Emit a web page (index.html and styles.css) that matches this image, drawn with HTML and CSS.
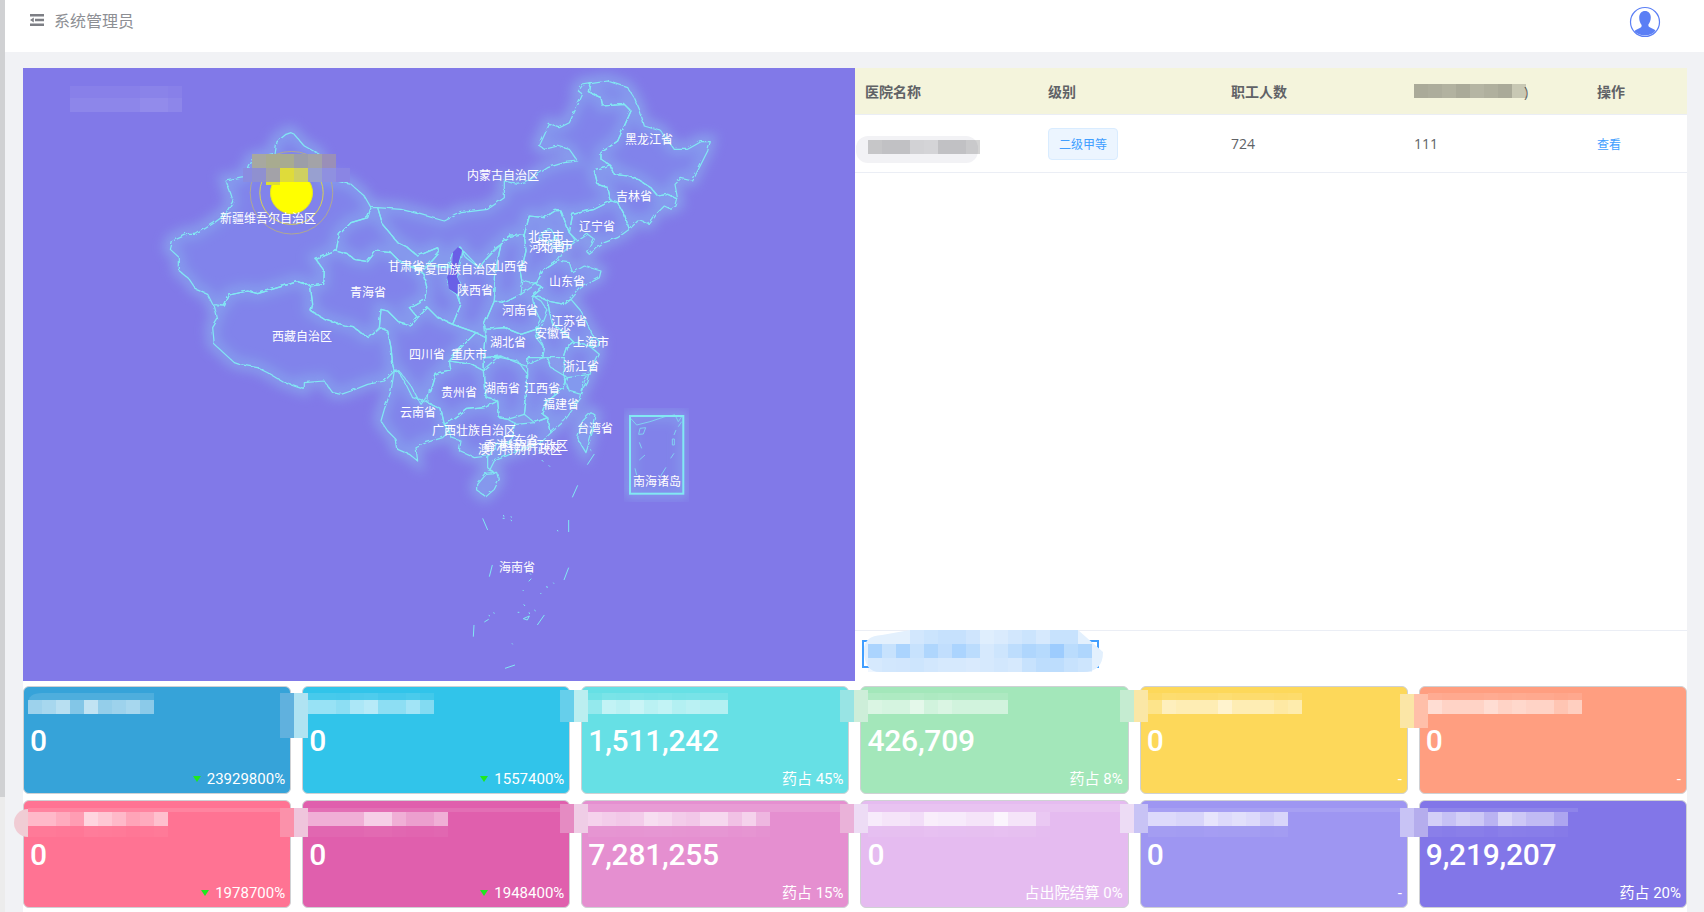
FILE: index.html
```html
<!DOCTYPE html>
<html lang="zh">
<head>
<meta charset="utf-8">
<title>系统管理员</title>
<link rel="stylesheet" href="styles.css">
</head>
<body>
<div class="app">
  <div class="strip"></div>
  <div class="main">
    <header class="topbar">
      <div class="topbar-left">
        <svg class="menu-icon" width="14" height="12" viewBox="0 0 14 12"><path d="M0 0h14v2.600H0zM5 4.700h9v2.600H5zM0 9.400h14V12H0zM0 6l3.800-2.400v4.800z"/></svg>
        <span class="role">系统管理员</span>
      </div>
      <svg class="avatar" width="32" height="32" viewBox="0 0 32 32">
        <circle cx="16" cy="16" r="14.500" fill="#fff" stroke="#5b7ff5" stroke-width="1.200"/>
        <path d="M16 5c3.400 0 5.800 2.600 5.800 6.300 0 3-1 5.400-2.400 7.200-.3 1.500.5 2.500 1.800 3.100l4 1.900c.6.300 1 .8 1.300 1.300A13.300 13.300 0 0 1 16 29.400 13.300 13.300 0 0 1 5.500 25.300c.3-.5.700-1 1.300-1.300l4-1.900c1.300-.6 2.100-1.600 1.800-3.100-1.400-1.800-2.400-4.200-2.400-7.200C10.200 7.600 12.600 5 16 5z" fill="#5b7ff5"/>
      </svg>
    </header>
    <div class="content">
      <section class="top-row">
        <div class="map-panel">
          <svg class="map" viewBox="23 68 832 613" width="832" height="613">
            <defs>
              <filter id="soft" x="-10%" y="-10%" width="120%" height="120%"><feGaussianBlur stdDeviation="6"/></filter>
              <filter id="rough" x="-5%" y="-5%" width="110%" height="110%">
                <feTurbulence type="turbulence" baseFrequency="0.16" numOctaves="2" seed="4" result="n"/>
                <feDisplacementMap in="SourceGraphic" in2="n" scale="2.600"/>
              </filter>
              <g id="provinces" transform="translate(150 70) scale(.33333)">
                <polygon points="420,185 405,190 378,212 372,250 305,265 280,320 225,330 240,370 248,395 230,425 190,455 135,490 108,490 65,510 58,535 85,560 85,600 115,625 135,655 170,670 185,700 220,705 235,672 290,660 320,668 380,650 440,632 480,645 518,640 520,600 495,565 555,540 565,490 600,455 650,440 660,410 640,375 600,340 555,330 520,325 505,250 460,225 430,190"/>
                <polygon points="190,705 220,705 235,672 290,660 320,668 380,650 440,632 478,645 485,700 480,720 520,745 580,765 610,770 635,790 655,800 690,770 710,780 720,830 725,880 730,900 700,930 650,940 600,960 570,970 545,965 520,930 460,935 460,955 400,935 350,905 320,890 265,880 250,875 190,820 185,770 200,745"/>
                <polygon points="495,565 555,540 590,550 610,565 650,572 675,540 720,545 745,570 785,590 820,610 830,650 825,685 790,705 775,710 800,740 780,765 745,755 710,720 690,715 685,770 655,800 635,790 610,770 580,765 520,745 480,720 485,700 478,645 518,640 520,600"/>
                <polygon points="565,490 600,455 650,440 660,410 680,410 695,460 720,490 740,515 770,530 800,555 860,530 865,545 830,585 815,600 830,650 825,685 790,705 775,710 800,740 830,710 860,740 905,760 930,700 920,672 897,655 890,620 905,590 830,585 785,590 745,570 720,545 675,540 650,572 610,565 590,550 555,540"/>
                <polygon points="680,410 750,415 810,430 880,450 930,425 1010,415 1060,380 1060,330 1100,340 1125,335 1160,310 1190,290 1240,275 1280,270 1255,235 1220,225 1180,235 1165,225 1195,160 1225,170 1255,155 1295,70 1282,60 1295,42 1320,38 1315,65 1350,80 1355,105 1420,100 1440,120 1420,165 1400,210 1350,245 1350,265 1380,285 1330,300 1340,340 1370,350 1380,390 1330,415 1265,430 1255,485 1230,420 1215,418 1180,440 1135,435 1120,490 1080,495 1050,520 1035,530 1000,570 985,590 945,560 930,530 910,545 890,590 830,585 865,545 860,530 800,555 770,530 740,515 720,490 695,460"/>
                <polygon points="1050,520 1035,590 1030,690 1000,760 1005,800 975,785 905,760 930,700 920,672 935,650 920,620 925,585 937,540 985,590 1000,570"/>
                <polygon points="685,770 690,715 710,720 745,755 780,765 800,740 830,710 860,740 905,760 975,785 930,830 895,870 900,900 855,910 840,960 810,1000 780,945 745,900 730,900 725,880 720,830 710,780"/>
                <polygon points="975,785 1005,800 1000,860 1000,900 960,880 895,870 930,830"/>
                <polygon points="1120,490 1075,500 1050,520 1035,590 1030,690 1060,695 1110,670 1115,630 1110,600 1125,540"/>
                <polygon points="1030,690 1060,695 1110,670 1155,640 1175,650 1145,675 1170,690 1190,720 1170,770 1110,790 1060,770 1005,775 1000,760"/>
                <polygon points="1005,775 1060,770 1110,790 1170,770 1155,800 1180,830 1175,860 1125,885 1110,880 1050,855 1000,860 1005,800"/>
                <polygon points="895,870 960,880 1000,900 1000,860 1050,855 1000,900 1005,980 1040,990 1000,1010 950,1015 910,1045 880,1060 870,1015 830,995 835,955 840,960 855,910 900,900"/>
                <g transform="translate(1050 0)">
                  <polygon points="270,38 320,30 380,50 400,80 415,115 430,165 480,180 520,235 560,235 600,212 628,212 620,240 600,280 575,330 540,322 522,340 530,385 500,370 470,375 450,350 440,345 410,325 380,315 340,310 330,285 300,265 300,245 350,210 370,165 390,120 370,100 305,105 300,80 265,65"/>
                  <polygon points="330,285 340,310 380,315 410,325 450,350 470,375 500,370 530,385 525,405 510,415 490,405 470,425 445,460 420,450 410,450 385,475 370,430 350,395 330,390 320,350 290,340 280,300"/>
                  <polygon points="330,390 350,395 370,430 385,475 350,500 310,515 290,530 265,550 260,545 280,505 260,490 230,510 205,485 215,430 280,415"/>
                  <polygon points="85,435 130,440 165,418 180,420 205,485 225,510 190,540 170,570 125,600 105,640 65,630 60,600 75,540 70,490"/>
                  <polygon points="130,480 150,475 165,500 140,515 115,500"/>
                  <polygon points="165,500 185,520 170,540 150,520"/>
                  <polygon points="170,570 205,575 215,605 250,585 300,600 295,620 240,650 210,685 190,700 140,690 120,680 95,675 125,650 105,640 125,600"/>
                  <polygon points="140,690 190,700 210,685 240,720 265,770 280,800 265,825 220,815 195,790 170,770 155,760 145,720"/>
                  <polygon points="140,690 145,720 155,760 170,770 195,790 220,815 200,830 190,860 145,860 125,860 130,830 105,780 120,750 105,720 95,675 120,680"/>
                  <polygon points="280,800 295,810 290,830 265,825"/>
                  <polygon points="200,830 220,815 265,825 295,850 270,900 260,935 240,970 205,960 190,920 190,860"/>
                </g>
                <g transform="translate(600 930)">
                  <polygon points="100,85 90,120 110,150 135,175 140,205 175,220 200,240 195,200 225,185 275,170 295,150 280,130 270,85 230,65 185,50 160,0 145,-25 130,-30 120,30"/>
                  <polygon points="280,130 295,150 300,170 330,180 325,210 370,230 410,225 425,215 440,190 480,185 495,130 470,115 445,110 440,60 400,80 350,85 310,115"/>
                  <polygon points="495,130 550,125 590,110 600,155 570,185 500,210 430,240 415,270 430,275 410,260 410,225 425,215 440,190 480,185"/>
                  <polygon points="400,-30 405,50 440,60 445,110 470,115 520,100 525,60 530,-20 500,-60 450,-70 400,-70"/>
                  <polygon points="525,60 520,100 550,125 590,110 575,100 590,60 640,20 650,-10 600,-40 590,-70 530,-70 530,-20"/>
                  <polygon points="590,110 600,155 640,120 690,50 700,0 715,-20 650,-10 640,20 590,60 575,100"/>
                  <polygon points="405,280 440,277 445,295 430,325 405,347 380,330 380,310"/>
                  <polygon points="720,95 735,105 725,150 705,215 690,190 680,170 695,120"/>
                </g>
              </g>
              <rect id="inset-box" x="630" y="416" width="53.300" height="77.700"/>
              <g id="islands" transform="translate(350 380) scale(.33333)">
                <path d="M733 222 712 254M683 316 667 352M656 420V456M656 563 642 600M583 705 562 735M495 855 465 865M372 735 370 770M427 555 418 590M398 415 413 450M575 240 580 245M596 256 600 260M720 208 724 212M622 450 624 454M460 405 462 410M458 415 464 415M482 410 486 412M482 420 486 423M540 580 543 584M536 604 544 596M588 620 594 622M610 608 612 611M518 630 521 633M571 642 574 639M521 673 525 678M503 697 508 697M553 690 557 693M430 698 434 700M416 706 420 708M403 726 416 718M486 790 488 793M537 697 539 702M520 716 538 708 532 720z"/>
                <path d="M842 115 860 135 900 125 945 110 975 105M975 105 985 125 995 110M870 145 887 143 880 162 866 163zM868 187 875 205M967 177H973V195H967zM978 150 972 165M995 125 985 140M885 225 868 240M972 220 962 235M948 262 932 288M855 265 860 285"/>
              </g>
            </defs>
            <use href="#provinces" class="glow" filter="url(#soft)"/>
            <use href="#inset-box" class="inset-glow" filter="url(#soft)"/>
            <use href="#provinces" class="fill"/>
            <use href="#provinces" class="line" filter="url(#rough)"/>
            <polygon class="ningxia" points="458,247 462,250 458,265 457,277 462,287 457,294 449,289 447,277 452,267 453,252"/>
            <use href="#islands" class="isles"/>
            <use href="#inset-box" class="inset"/>
            <circle class="ring-outer" cx="291.500" cy="192.700" r="41.300"/>
            <circle class="ring-inner" cx="291.500" cy="192.700" r="31.700"/>
            <circle class="dot" cx="291.500" cy="192.700" r="21"/>
            <g class="labels">
              <text x="268" y="217">新疆维吾尔自治区</text>
              <text x="503" y="174">内蒙古自治区</text>
              <text x="649" y="138">黑龙江省</text>
              <text x="634" y="195">吉林省</text>
              <text x="597" y="225">辽宁省</text>
              <text x="546" y="235">北京市</text>
              <text x="555" y="244">天津市</text>
              <text x="547" y="246">河北省</text>
              <text x="510" y="265">山西省</text>
              <text x="406" y="265">甘肃省</text>
              <text x="455" y="268">宁夏回族自治区</text>
              <text x="475" y="289">陕西省</text>
              <text x="368" y="291">青海省</text>
              <text x="567" y="280">山东省</text>
              <text x="520" y="309">河南省</text>
              <text x="569" y="320">江苏省</text>
              <text x="553" y="332">安徽省</text>
              <text x="591" y="341">上海市</text>
              <text x="508" y="341">湖北省</text>
              <text x="302" y="335">西藏自治区</text>
              <text x="427" y="353">四川省</text>
              <text x="469" y="353">重庆市</text>
              <text x="581" y="365">浙江省</text>
              <text x="459" y="391">贵州省</text>
              <text x="502" y="387">湖南省</text>
              <text x="542" y="387">江西省</text>
              <text x="561" y="403">福建省</text>
              <text x="418" y="411">云南省</text>
              <text x="595" y="427">台湾省</text>
              <text x="474" y="429">广西壮族自治区</text>
              <text x="520" y="439">广东省</text>
              <text x="526" y="444">香港特别行政区</text>
              <text x="520" y="448">澳门特别行政区</text>
              <text x="657" y="480">南海诸岛</text>
              <text x="517" y="566">海南省</text>
            </g>
          </svg>
        </div>
        <div class="table-panel">
          <div class="table-head">
            <div class="cell">医院名称</div>
            <div class="cell">级别</div>
            <div class="cell">职工人数</div>
            <div class="cell cell-paren">)</div>
            <div class="cell">操作</div>
          </div>
          <div class="table-row">
            <div class="cell"></div>
            <div class="cell"><span class="tag">二级甲等</span></div>
            <div class="cell">724</div>
            <div class="cell">111</div>
            <div class="cell"><a class="link">查看</a></div>
          </div>
          <div class="table-foot"><div class="outline-btn"></div></div>
        </div>
      </section>
      <section class="cards">
        <article class="card c1"><div class="value">0</div><div class="foot"><i class="down"></i>23929800%</div></article>
        <article class="card c2"><div class="value">0</div><div class="foot"><i class="down"></i>1557400%</div></article>
        <article class="card c3"><div class="value">1,511,242</div><div class="foot">药占 45%</div></article>
        <article class="card c4"><div class="value">426,709</div><div class="foot">药占 8%</div></article>
        <article class="card c5"><div class="value">0</div><div class="foot">-</div></article>
        <article class="card c6"><div class="value">0</div><div class="foot">-</div></article>
        <article class="card c7"><div class="value">0</div><div class="foot"><i class="down"></i>1978700%</div></article>
        <article class="card c8"><div class="value">0</div><div class="foot"><i class="down"></i>1948400%</div></article>
        <article class="card c9"><div class="value">7,281,255</div><div class="foot">药占 15%</div></article>
        <article class="card c10"><div class="value">0</div><div class="foot">占出院结算 0%</div></article>
        <article class="card c11"><div class="value">0</div><div class="foot">-</div></article>
        <article class="card c12"><div class="value">9,219,207</div><div class="foot">药占 20%</div></article>
      </section>
    </div>
  </div>
</div>
<svg id="redactions" class="redactions" viewBox="0 0 1704 912" width="1704" height="912">
  <rect class="blob-row" x="856" y="136" width="122" height="27" rx="12"/>
  <path class="blob-blue" d="M864 650q0-14 18-15l28-5h168l25 22q0 20-20 20H880q-16 0-16-22z"/>
  <path class="blob-pink" d="M28 809a14 14 0 0 0 0 28z"/>
  <path class="blob-card" d="M28 714v-10q0-11 14-11h112v21z"/>
</svg>
<script src="script.js"></script>
</body>
</html>
```
FILE: styles.css
```css
* { box-sizing: border-box; }
html, body { margin: 0; padding: 0; }
body {
  width: 1704px;
  height: 912px;
  overflow: hidden;
  position: relative;
  background: #f1f2f5;
  font-family: "Open Sans", "Noto Sans CJK SC", sans-serif;
  color: #606266;
}
.app { display: flex; height: 912px; }
.strip {
  width: 5px;
  flex: none;
  background: linear-gradient(#d0d1d3 0 797px, #ececec 797px);
}
.main { flex: 1; display: flex; flex-direction: column; min-width: 0; }
.topbar {
  height: 52px;
  flex: none;
  background: #fff;
  display: flex;
  align-items: flex-start;
  justify-content: space-between;
  padding: 0 43px 0 25px;
}
.topbar-left { display: flex; align-items: center; gap: 10px; height: 40px; }
.menu-icon { fill: #7d7f85; }
.role { font-size: 16px; color: #8d8f94; }
.avatar { margin-top: 6px; }
.content { padding: 16px 17px 0 18px; flex: 1; display: flex; flex-direction: column; }
.top-row { display: flex; height: 613px; flex: none; }
.map-panel { width: 832px; flex: none; background: #8179e8; }
.map { display: block; }
.glow { fill: none; stroke: #8fbcf0; stroke-width: 36; opacity: .55; }
.fill { fill: rgba(128, 152, 240, .34); stroke: none; }
.line { fill: none; stroke: #82e8f3; stroke-width: 3.600; stroke-linejoin: round; }
.ningxia { fill: #6a5fe6; }
.isles { fill: none; stroke: #82e8f3; stroke-width: 3; }
.inset { fill: rgba(128, 152, 240, .3); stroke: #82e8f3; stroke-width: 2; }
.inset-glow { fill: none; stroke: #8fbcf0; stroke-width: 8; opacity: .6; }
.labels text {
  font-family: "Noto Sans CJK SC", sans-serif;
  font-size: 12px;
  fill: #fff;
  text-anchor: middle;
  dominant-baseline: central;
}
.ring-outer { fill: none; stroke: #bcb07a; stroke-opacity: .8; stroke-width: 1; }
.ring-inner { fill: none; stroke: #e0d840; stroke-opacity: .9; stroke-width: 1; }
.dot { fill: #ffff00; stroke: #e8e820; stroke-width: 1; }

.table-panel { width: 832px; flex: none; background: #fff; display: flex; flex-direction: column; font-size: 14px; }
.table-head, .table-row { display: grid; grid-template-columns: repeat(4, 183px) 100px; align-items: center; }
.table-head { height: 47px; background: #f4f4dc; border-bottom: 1px solid #ebeef5; font-weight: 700; }
.table-row { height: 58px; border-bottom: 1px solid #ebeef5; }
.cell { padding: 0 10px; }
.cell-paren { padding-left: 120px; font-weight: 400; }
.tag {
  display: inline-flex;
  align-items: center;
  height: 32px;
  padding: 0 10px;
  font-size: 12px;
  color: #409eff;
  background: #ecf5ff;
  border: 1px solid #d9ecff;
  border-radius: 4px;
}
.link { font-size: 12px; color: #409eff; }
.table-foot { margin-top: auto; height: 51px; border-top: 1px solid #ebeef5; padding: 9px 0 0 7px; }
.outline-btn { width: 237px; height: 28px; border: 2px solid #409eff; }

.cards {
  flex: 1;
  background: #fff;
  display: grid;
  grid-template-columns: repeat(6, 1fr);
  grid-auto-rows: 108px;
  gap: 6px 11px;
  padding-top: 5px;
  align-content: start;
}
.card {
  border: 1px solid #cfd1d4;
  border-radius: 6px;
  color: #fff;
  padding: 36px 5px 4px 6px;
  display: flex;
  flex-direction: column;
  justify-content: space-between;
  font-family: Roboto, "Noto Sans CJK SC", sans-serif;
}
.value { font-size: 30px; line-height: 36px; font-weight: 500; letter-spacing: -.25px; }
.foot { font-size: 15px; line-height: 20px; text-align: right; display: flex; justify-content: flex-end; align-items: center; gap: 6px; }
.down { width: 0; height: 0; border-left: 4.500px solid transparent; border-right: 4.500px solid transparent; border-top: 6px solid #1fe81f; }
.c1 { background: #36a3d9; }
.c2 { background: #31c4ea; }
.c3 { background: #66e0e5; }
.c4 { background: #a3e7ba; }
.c5 { background: #fdd85a; }
.c6 { background: #ff9e80; }
.c7 { background: #ff7393; }
.c8 { background: #e05fad; }
.c9 { background: #e58fd0; }
.c10 { background: #e5bbf0; }
.c11 { background: #9e96f2; }
.c12 { background: #8276e8; }

.redactions { position: absolute; left: 0; top: 0; pointer-events: none; }
.blob-row { fill: #f2f2f5; }
.blob-blue { fill: #e3f0fd; }
.blob-pink { fill: #f0ccd4; }
.blob-card { fill: rgba(255, 255, 255, .12); }
```
FILE: script.js
```js
(function () {
  var svg = document.getElementById('redactions');
  function cell(x, y, w, h, fill, alpha) {
    var r = document.createElementNS('http://www.w3.org/2000/svg', 'rect');
    r.setAttribute('x', x); r.setAttribute('y', y);
    r.setAttribute('width', w); r.setAttribute('height', h);
    r.setAttribute('fill', fill);
    if (alpha !== undefined) r.setAttribute('fill-opacity', alpha);
    svg.appendChild(r);
  }
  function row(x, y, h, fill, alphas) {
    alphas.forEach(function (a, i) { cell(x + i * 14, y, 14, h, fill, a); });
  }
  function colors(x, y, h, list) {
    list.forEach(function (c, i) { cell(x + i * 14, y, 14, h, c); });
  }
  var W = '#fff';

  // titles of the cards, strong row
  var top = [
    [28, [.45,.5,.6,.3,.65,.4,.45,.5,.35]],
    [308, [.5,.5,.45,.6,.65,.45,.45,.55,.4]],
    [588, [.3,.6,.55,.65,.55,.6,.5,.55,.5,.5]],
    [868, [.6,.55,.55,.7,.5,.6,.5,.5,.5,.5]],
    [1148, [.3,.6,.55,.55,.55,.7,.55,.55,.55,.45,.5]],
    [1428, [.65,.55,.55,.55,.65,.55,.6,.55,.55,.4,.5]]
  ];
  var bottom = [
    [28, [.5,.5,.4,.3,.7,.6,.5,.35,.4,.55]],
    [308, [.5,.5,.5,.5,.7,.7,.5,.4,.4,.5]],
    [588, [.6,.55,.5,.55,.7,.65,.55,.5,.65,.65,.45,.6,.35]],
    [868, [.7,.6,.6,.5,.75,.7,.7,.6,.6,.85,.6,.6,.2]],
    [1148, [.65,.65,.6,.6,.75,.65,.7,.65,.5,.6]],
    [1428, [.65,.55,.65,.6,.45,.7,.6,.5,.5,.35]]
  ];
  top.forEach(function (t, i) {
    row(t[0], 700, 14, W, t[1]);
    if (i > 0) row(t[0], 693, 7, W, t[1].map(function (a) { return a * .22; }));
  });
  bottom.forEach(function (t) {
    row(t[0], 812, 14, W, t[1]);
    row(t[0], 826, 11, W, t[1].map(function (a) { return a * .1; }));
  });
  cell(28, 808, 252, 4, W, .12);
  cell(308, 808, 252, 4, W, .1);
  cell(588, 804, 252, 8, W, .12);
  cell(868, 804, 252, 8, W, .12);
  cell(1148, 808, 252, 4, W, .1);
  cell(1428, 808, 150, 4, W, .1);

  // blocks bridging the gaps between the cards: solid colours
  [[280, 693, 45, '#60b1de', '#b0e3f2'], [560, 690, 32, '#66cfeb', '#bbeef0'], [840, 690, 32, '#98e4e4', '#cdeed9'],
   [1120, 690, 32, '#c5ecd1', '#fae7a6'], [1400, 694, 34, '#fbe6a6', '#ffbfa9'],
   [280, 808, 29, '#fb91aa', '#efc5dc'], [560, 804, 29, '#e58bc2', '#efcde6'], [840, 804, 29, '#eab2d9', '#eddcf5'],
   [1120, 804, 29, '#eddcf5', '#c8c3f5'], [1400, 808, 29, '#c8c3f5', '#b5aded']
  ].forEach(function (b) {
    cell(b[0], b[1], 14, b[2], b[3]);
    cell(b[0] + 14, b[1], 14, b[2], b[4]);
  });

  // map title and the point's name
  row(70, 86, 12, W, [.06,.06,.06,.06,.06,.08,.08,.06]);
  row(70, 98, 14, W, [.1,.1,.1,.1,.1,.14,.14,.1]);
  colors(252, 154, 14, ['#a7a8a0','#a8ab90','#a8ab90','#9c9ea8','#a3a3a8','#b8ba88']);
  cell(322, 154, 14, 14, '#9a8fb8');
  cell(243, 168, 9, 14, '#8a8ce0');
  colors(252, 168, 14, ['#8f90d0','#a3a2a8','#dfdb3a','#cfd060','#98a0d0','#8f90e0','#8a85e4']);
  cell(266, 182, 14, 3, '#dede30');

  // table cells
  row(1414, 84, 14, '#000', [.3,.29,.27,.3,.26,.28,.3,.18]);
  row(868, 140, 14, '#000', [.18,.2,.2,.13,.12,.2,.2,.17]);

  // pagination block
  var B = '#409eff';
  row(910, 630, 14, B, [.1,.15,.18,.18,.12,.02,.05,.1,.15,.08,.17,.17]);
  row(868, 644, 14, B, [.34,.17,.34,.17,.32,.21,.34,.24,.08,.13,.23,.32,.27,.43,.25,.32]);
  row(868, 658, 14, B, [.08,.1,.11,.13,.1,.08,.08,.06,.08,.1,.08,.17,.23,.23,.17,.13]);
})();
```
